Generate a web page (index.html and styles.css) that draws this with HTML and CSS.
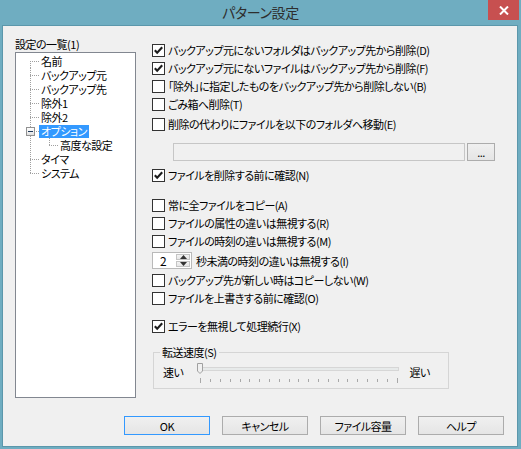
FILE: index.html
```html
<!DOCTYPE html>
<html lang="ja">
<head>
<meta charset="utf-8">
<title>パターン設定</title>
<link rel="stylesheet" href="styles.css">
</head>
<body>
<div class="window">
  <div class="titlebar">
    <span class="title">パターン設定</span>
    <span class="close"><svg width="10" height="9" viewBox="0 0 10 9"><path d="M1 0.5 L9 8.5 M9 0.5 L1 8.5" stroke="#fff" stroke-width="2"/></svg></span>
  </div>
  <div class="client">
    <div class="main">
      <div class="left">
        <div class="tree-label">設定の一覧(1)</div>
        <div class="tree">
          <div class="node"><span class="g f"></span><span class="txt">名前</span></div>
          <div class="node"><span class="g t"></span><span class="txt">バックアップ元</span></div>
          <div class="node"><span class="g t"></span><span class="txt">バックアップ先</span></div>
          <div class="node"><span class="g t"></span><span class="txt">除外1</span></div>
          <div class="node"><span class="g t"></span><span class="txt">除外2</span></div>
          <div class="node"><span class="g t"><span class="exp"><span class="minus"></span></span></span><span class="txt sel">オプション</span></div>
          <div class="node"><span class="g v"></span><span class="g l"></span><span class="txt">高度な設定</span></div>
          <div class="node"><span class="g t"></span><span class="txt">タイマ</span></div>
          <div class="node"><span class="g l"></span><span class="txt">システム</span></div>
        </div>
      </div>
      <div class="right">
        <div class="cb first"><span class="box on"><svg width="11" height="11" viewBox="0 0 11 11"><path d="M1.8 5.2 L4.2 7.8 L9.2 2.2" fill="none" stroke="#1c1c1c" stroke-width="2.1"/></svg></span>バックアップ元にないフォルダはバックアップ先から削除(D)</div>
        <div class="cb"><span class="box on"><svg width="11" height="11" viewBox="0 0 11 11"><path d="M1.8 5.2 L4.2 7.8 L9.2 2.2" fill="none" stroke="#1c1c1c" stroke-width="2.1"/></svg></span>バックアップ元にないファイルはバックアップ先から削除(F)</div>
        <div class="cb"><span class="box"></span>「除外」に指定したものをバックアップ先から削除しない(B)</div>
        <div class="cb"><span class="box"></span>ごみ箱へ削除(T)</div>
        <div class="cb move"><span class="box"></span>削除の代わりにファイルを以下のフォルダへ移動(E)</div>
        <div class="pathrow">
          <span class="path-input"></span>
          <span class="btn small">...</span>
        </div>
        <div class="cb confirm"><span class="box on"><svg width="11" height="11" viewBox="0 0 11 11"><path d="M1.8 5.2 L4.2 7.8 L9.2 2.2" fill="none" stroke="#1c1c1c" stroke-width="2.1"/></svg></span>ファイルを削除する前に確認(N)</div>
        <div class="cb section"><span class="box"></span>常に全ファイルをコピー(A)</div>
        <div class="cb"><span class="box"></span>ファイルの属性の違いは無視する(R)</div>
        <div class="cb"><span class="box"></span>ファイルの時刻の違いは無視する(M)</div>
        <div class="spinrow">
          <span class="spin">
            <span class="spin-val">2</span>
            <span class="spin-btns">
              <span class="sb"><svg width="7" height="4" viewBox="0 0 7 4"><path d="M0 4 L3.5 0 L7 4 Z" fill="#333"/></svg></span>
              <span class="sb"><svg width="7" height="4" viewBox="0 0 7 4"><path d="M0 0 L3.5 4 L7 0 Z" fill="#333"/></svg></span>
            </span>
          </span>
          <span class="spin-label">秒未満の時刻の違いは無視する(I)</span>
        </div>
        <div class="cb after-spin"><span class="box"></span>バックアップ先が新しい時はコピーしない(W)</div>
        <div class="cb"><span class="box"></span>ファイルを上書きする前に確認(O)</div>
        <div class="cb section-small"><span class="box on"><svg width="11" height="11" viewBox="0 0 11 11"><path d="M1.8 5.2 L4.2 7.8 L9.2 2.2" fill="none" stroke="#1c1c1c" stroke-width="2.1"/></svg></span>エラーを無視して処理続行(X)</div>
        <fieldset class="group">
          <legend>転送速度(S)</legend>
          <div class="slider-row">
            <span class="sl-label">速い</span>
            <svg class="slider" width="206" height="22" viewBox="0 0 206 22">
              <rect x="3.5" y="5.5" width="199" height="3" fill="#e7eaea" stroke="#d6d6d6"/>
              <path d="M1.5 1.5 H6.5 V9 L4 11.5 L1.5 9 Z" fill="#f0f0f0" stroke="#a0a0a0"/>
              <g stroke="#a8a8a8" stroke-width="1">
                <line x1="4.5" y1="16" x2="4.5" y2="21"/>
                <line x1="14.5" y1="17" x2="14.5" y2="20"/>
                <line x1="24.5" y1="17" x2="24.5" y2="20"/>
                <line x1="34.5" y1="17" x2="34.5" y2="20"/>
                <line x1="44.5" y1="17" x2="44.5" y2="20"/>
                <line x1="53.5" y1="17" x2="53.5" y2="20"/>
                <line x1="63.5" y1="17" x2="63.5" y2="20"/>
                <line x1="73.5" y1="17" x2="73.5" y2="20"/>
                <line x1="83.5" y1="17" x2="83.5" y2="20"/>
                <line x1="93.5" y1="17" x2="93.5" y2="20"/>
                <line x1="102.5" y1="17" x2="102.5" y2="20"/>
                <line x1="112.5" y1="17" x2="112.5" y2="20"/>
                <line x1="122.5" y1="17" x2="122.5" y2="20"/>
                <line x1="132.5" y1="17" x2="132.5" y2="20"/>
                <line x1="142.5" y1="17" x2="142.5" y2="20"/>
                <line x1="151.5" y1="17" x2="151.5" y2="20"/>
                <line x1="161.5" y1="17" x2="161.5" y2="20"/>
                <line x1="171.5" y1="17" x2="171.5" y2="20"/>
                <line x1="181.5" y1="17" x2="181.5" y2="20"/>
                <line x1="191.5" y1="17" x2="191.5" y2="20"/>
                <line x1="201.5" y1="16" x2="201.5" y2="21"/>
              </g>
            </svg>
            <span class="sl-label">遅い</span>
          </div>
        </fieldset>
      </div>
    </div>
    <div class="buttons">
      <span class="btn default">OK</span>
      <span class="btn">キャンセル</span>
      <span class="btn">ファイル容量</span>
      <span class="btn">ヘルプ</span>
    </div>
  </div>
</div>
</body>
</html>
```
FILE: styles.css
```css
* { box-sizing: border-box; }
html, body { margin: 0; padding: 0; }
body {
  width: 521px;
  height: 449px;
  overflow: hidden;
  background: #6fadc1;
  font-family: "Noto Sans CJK JP", "Noto Sans", sans-serif;
  font-size: 11px;
  letter-spacing: -0.5px;
  line-height: 16px;
  color: #000;
  font-feature-settings: "palt";
}
.window {
  width: 521px;
  height: 449px;
  background: #6fadc1;
  display: flex;
  flex-direction: column;
}
.titlebar {
  height: 25px;
  flex: none;
  display: grid;
  grid-template-columns: 1fr auto 1fr;
}
.title {
  grid-column: 2;
  font-size: 14px;
  letter-spacing: -0.4px;
  line-height: 24px;
  color: #2e2e2e;
}
.close {
  grid-column: 3;
  justify-self: end;
  align-self: start;
  width: 31px;
  height: 20px;
  margin-right: 2px;
  background: #c75050;
  display: flex;
  align-items: center;
  justify-content: center;
}
.client {
  flex: 1;
  margin: 0 3px 2px 2px;
  border: 1px solid #5b97ab;
  background: #f0f0f0;
  padding: 10px 13px 11px 12px;
  display: flex;
  flex-direction: column;
}
.main {
  height: 362px;
  display: grid;
  grid-template-columns: 121px 1fr;
  column-gap: 16px;
}
.tree-label { height: 16px; line-height: 16px; }
.tree {
  height: 346px;
  background: #fff;
  border: 1px solid #828790;
  padding: 1px 0 0 5px;
}
.node {
  height: 14px;
  display: flex;
  align-items: center;
}
.g {
  flex: none;
  width: 19px;
  height: 14px;
  display: flex;
  align-items: center;
  background-repeat: no-repeat;
}
.g.t, .g.f, .g.l, .g.v { --vd: repeating-linear-gradient(to bottom, #a0a0a0 0 1px, transparent 1px 2px); --hd: repeating-linear-gradient(to right, #a0a0a0 0 1px, transparent 1px 2px); }
.g.v { background-image: var(--vd); background-size: 1px 14px; background-position: 9px 0; }
.g.t { background-image: var(--vd), var(--hd); background-size: 1px 14px, 10px 1px; background-position: 9px 0, 9px 7px; }
.g.f { background-image: var(--vd), var(--hd); background-size: 1px 7px, 10px 1px; background-position: 9px 7px, 9px 7px; }
.g.l { background-image: var(--vd), var(--hd); background-size: 1px 8px, 10px 1px; background-position: 9px 0, 9px 7px; }
.exp {
  width: 9px;
  height: 9px;
  margin-left: 5px;
  border: 1px solid #919191;
  background: linear-gradient(#ffffff, #e0e0e0);
  display: flex;
  align-items: center;
  justify-content: center;
}
.minus { width: 5px; height: 1px; background: #1e395b; }
.txt {
  margin-left: -1px;
  padding: 0 2px;
  line-height: 13px;
  white-space: nowrap;
}
.txt.sel { background: #3399ff; color: #fff; }

.right { padding-top: 5px; display: flex; flex-direction: column; }
.cb {
  height: 18px;
  display: flex;
  align-items: center;
  gap: 3px;
  white-space: nowrap;
}
.box {
  flex: none;
  width: 13px;
  height: 13px;
  border: 1px solid #333;
  background: #fff;
  display: flex;
  align-items: center;
  justify-content: center;
}
.cb.move { margin-top: 2px; }
.pathrow {
  margin-top: 10px;
  height: 18px;
  padding-left: 21px;
  display: flex;
  gap: 2px;
}
.path-input {
  width: 292px;
  height: 18px;
  border: 1px solid #c6c6c6;
  background: #f0f0f0;
}
.btn {
  display: flex;
  align-items: center;
  justify-content: center;
  border: 1px solid #acacac;
  background: linear-gradient(#f0f0f0, #e5e5e5);
  white-space: nowrap;
}
.btn.small { width: 28px; height: 18px; font-size: 11px; line-height: 10px; align-items: flex-end; padding-bottom: 3px; }
.cb.confirm { margin-top: 5px; }
.cb.section { margin-top: 12px; }
.spinrow {
  margin-top: 1px;
  height: 19px;
  display: flex;
  align-items: center;
  gap: 4px;
}
.spin {
  width: 40px;
  height: 17px;
  border: 1px solid #b9b9b9;
  background: #fff;
  display: flex;
}
.spin-val { width: 23px; padding-left: 7px; line-height: 15px; font-size: 12px; }
.spin-btns { flex: 1; display: flex; flex-direction: column; padding: 1px 1px 1px 0; gap: 1px; }
.sb {
  flex: 1;
  border: 1px solid #c4c4c4;
  background: linear-gradient(#f3f3f3, #e6e6e6);
  display: flex;
  align-items: center;
  justify-content: center;
}
.cb.after-spin { margin-top: 1px; }
.cb.section-small { margin-top: 10px; }
.group {
  margin: 9px 0 0 1px;
  width: 296px;
  border: 1px solid #d5d5d5;
  padding: 2px 8px 4px 9px;
  min-width: 0;
}
.group legend { padding: 0 2px; margin-left: -3px; line-height: 16px; }
.slider-row { display: flex; align-items: flex-start; height: 22px; }
.sl-label { line-height: 16px; margin-top: 2px; }
.slider { flex: none; margin: 0 7px 0 13px; }

.buttons {
  margin-top: 18px;
  height: 19px;
  display: flex;
  justify-content: flex-end;
  gap: 12px;
}
.buttons .btn { width: 86px; height: 19px; }
.btn.default { border-color: #3399ff; }
```
